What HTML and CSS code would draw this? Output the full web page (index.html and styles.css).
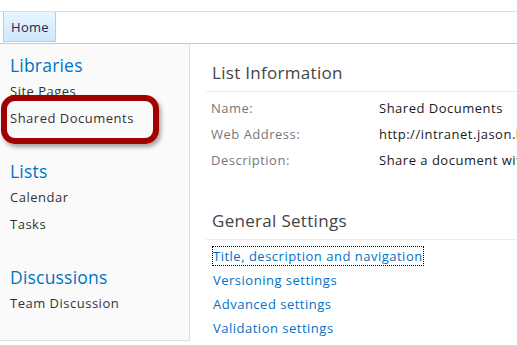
FILE: index.html
```html
<!DOCTYPE html>
<html lang="en">
  <head>
    <meta charset="UTF-8" />
    <title>Shared Documents - Settings</title>
    <link rel="stylesheet" href="styles.css">
  </head>
  <body>
    <div class="top-strip"></div>

    <!-- Top navigation -->
    <div class="top-nav">
      <a class="nav-tab" href="#">Home</a>
    </div>

    <div class="page">
      <!-- Quick launch -->
      <aside class="quick-launch">
        <div class="ql-group">
          <a class="ql-heading" href="#">Libraries</a>
          <a class="ql-item" href="#">Site Pages</a>
          <a class="ql-item" href="#">Shared Documents</a>
        </div>
        <div class="ql-group">
          <a class="ql-heading" href="#">Lists</a>
          <a class="ql-item" href="#">Calendar</a>
          <a class="ql-item" href="#">Tasks</a>
        </div>
        <div class="ql-group">
          <a class="ql-heading" href="#">Discussions</a>
          <a class="ql-item" href="#">Team Discussion</a>
        </div>
        <div class="callout"></div>
      </aside>

      <!-- Settings -->
      <main class="content">
        <section class="section">
          <h2 class="section-title">List Information</h2>
          <dl class="info">
            <dt>Name:</dt>
            <dd>Shared Documents</dd>
            <dt>Web Address:</dt>
            <dd>http://intranet.jason.local/Shared Documents/Forms/AllItems.aspx</dd>
            <dt>Description:</dt>
            <dd>Share a document with the team by adding it to this document library.</dd>
          </dl>
        </section>

        <section class="section">
          <h2 class="section-title">General Settings</h2>
          <ul class="settings-links">
            <li><a class="focused" href="#">Title, description and navigation</a></li>
            <li><a href="#">Versioning settings</a></li>
            <li><a href="#">Advanced settings</a></li>
            <li><a href="#">Validation settings</a></li>
          </ul>
        </section>
      </main>
    </div>
  </body>
</html>
```

FILE: styles.css
```css
/* General Styles */
body {
  margin: 0;
  font-family: "Open Sans", "Noto Sans", sans-serif;
  font-size: 13px;
  letter-spacing: 0.5px;
  color: #262626;
  background: #fff;
  overflow: hidden;
}

a {
  text-decoration: none;
}

.top-strip {
  height: 11px;
  border-bottom: 1px solid #dedede;
}

/* Top navigation */
.top-nav {
  height: 31px;
  padding-left: 3px;
  border-bottom: 1px solid #c8c8c8;
  display: flex;
  align-items: flex-start;
}

.nav-tab {
  height: 29px;
  padding: 0 6px 0 7px;
  display: flex;
  align-items: center;
  background: linear-gradient(#e8f5ff, #cce8fc);
  border: 1px solid #a7d3f3;
  border-top: none;
  color: #1b2a55;
  font-size: 13px;
  letter-spacing: 0.3px;
}

/* Layout */
.page {
  display: grid;
  grid-template-columns: 190px 1fr;
  height: 301px;
  overflow: hidden;
}

/* Quick launch */
.quick-launch {
  position: relative;
  background: #fafafb;
  border-right: 1px solid #dedede;
  border-bottom: 1px solid #dedede;
  padding: 9px 0 0 10px;
  height: 287px;
}

.ql-group {
  display: flex;
  flex-direction: column;
  margin-bottom: 27px;
}

.ql-heading {
  color: #0072c6;
  font-size: 17.5px;
  letter-spacing: 0.2px;
  line-height: 24px;
  margin-bottom: 1px;
}

.ql-item {
  color: #333;
  font-size: 13px;
  line-height: 27px;
}

/* Red annotation drawn over the nav item */
.callout {
  position: absolute;
  left: 1px;
  top: 51px;
  width: 146px;
  height: 37px;
  border: 6px solid #a30000;
  border-radius: 14px;
  box-shadow: 2px 3px 4px rgba(0, 0, 0, 0.35);
}

/* Settings */
.content {
  padding: 17px 0 0 16px;
  overflow: hidden;
}

.section {
  margin-bottom: 40px;
}

.section:last-child {
  margin-bottom: 0;
}

.section-title {
  margin: 0 0 7px;
  padding: 0 0 6px 6px;
  font-weight: normal;
  font-size: 17px;
  letter-spacing: 0.3px;
  line-height: 24px;
  color: #444;
  border-bottom: 1px solid #ebebeb;
}

.info {
  display: grid;
  grid-template-columns: 168px 1fr;
  margin: 0;
  padding-left: 5px;
  row-gap: 8px;
}

.info dt {
  color: #777;
  line-height: 18px;
}

.info dd {
  margin: 0;
  color: #1a1a1a;
  line-height: 18px;
  white-space: nowrap;
  overflow: hidden;
}

.settings-links {
  list-style: none;
  margin: 0;
  padding-left: 7px;
}

.settings-links li {
  line-height: 18px;
  margin-bottom: 6px;
}

.settings-links a {
  color: #0072c6;
}

.settings-links .focused {
  outline: 1px dotted #000;
}
```
